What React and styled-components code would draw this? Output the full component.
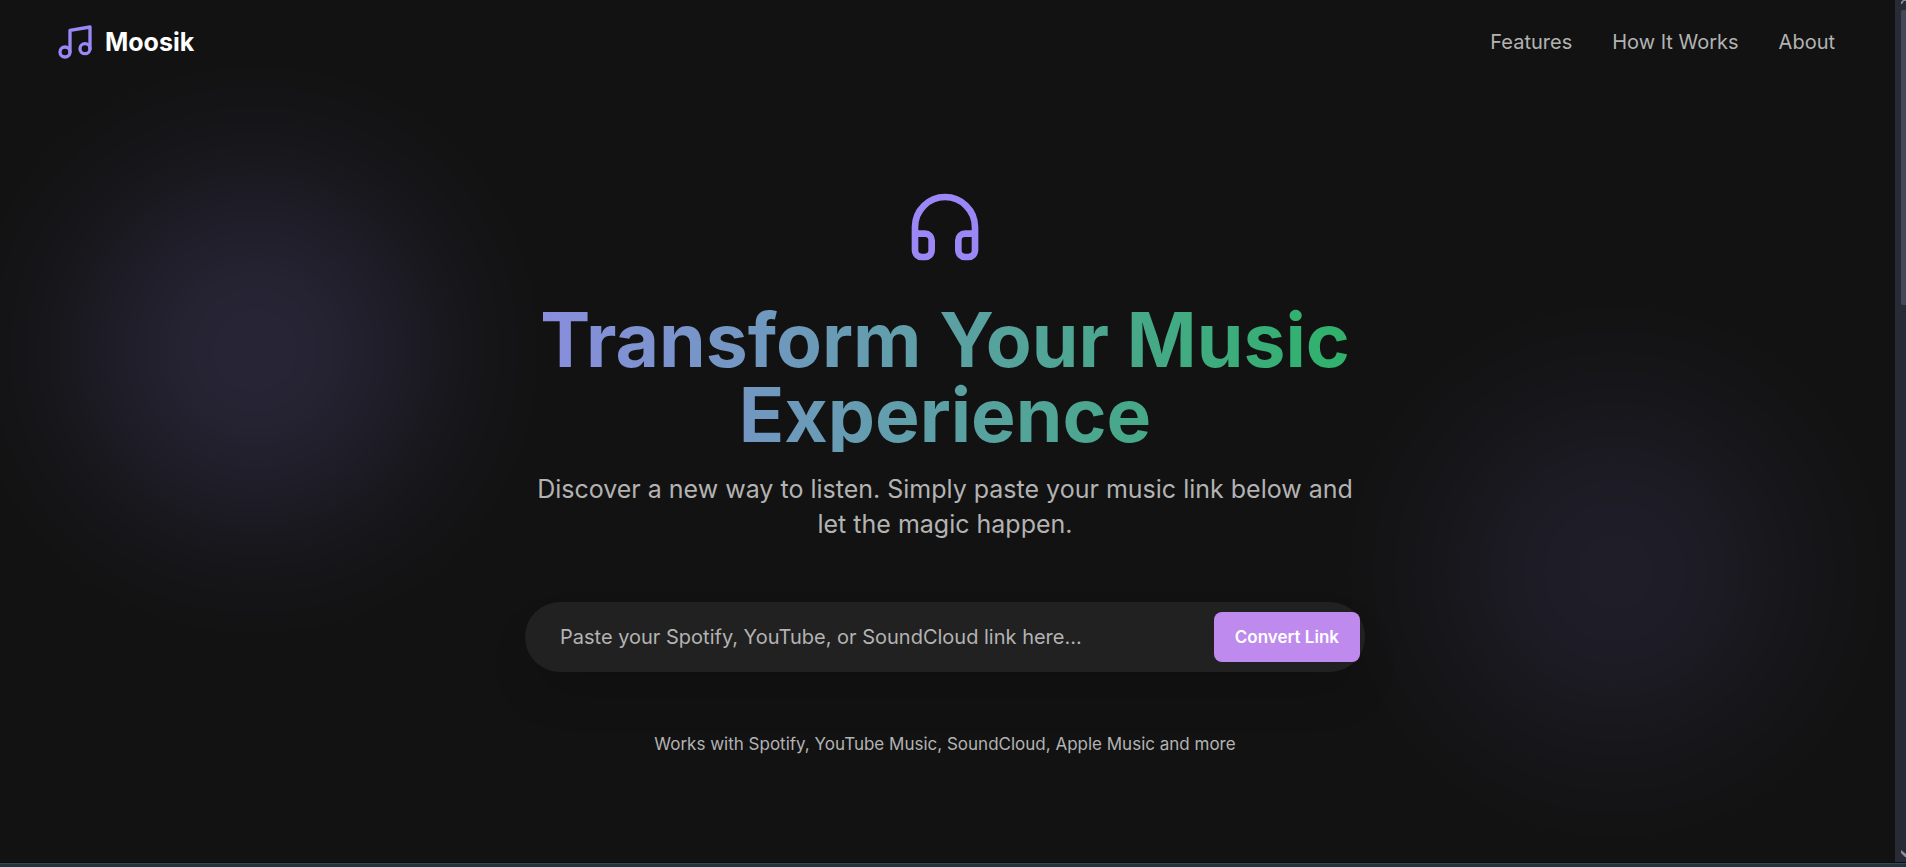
import React from "react";
import styled, { createGlobalStyle } from "styled-components";
import { Music, Headphones } from "lucide-react";

const GlobalStyle = createGlobalStyle`
  *, *::before, *::after { box-sizing: border-box; }
  body {
    margin: 0;
    background: #121212;
    color: #ffffff;
    font-family: Inter, "Liberation Sans", sans-serif;
  }
`;

const Frame = styled.div`
  display: grid;
  grid-template-columns: 1fr 11px;
  grid-template-rows: 1fr 5px;
  min-height: 100vh;
`;

const Page = styled.div`
  position: relative;
  display: flex;
  flex-direction: column;
  overflow: hidden;
`;

const Glow = styled.div`
  position: absolute;
  width: 340px;
  height: 340px;
  border-radius: 50%;
  background: #9b87f5;
  opacity: ${(p) => p.$opacity};
  filter: blur(80px);
  top: ${(p) => p.$top};
  left: ${(p) => p.$left};
  right: ${(p) => p.$right};
  bottom: ${(p) => p.$bottom};
`;

const Header = styled.header`
  display: flex;
  justify-content: space-between;
  align-items: center;
  padding: 22px 60px 22px 55px;
  z-index: 1;
`;

const Brand = styled.a`
  display: flex;
  align-items: center;
  gap: 10px;
  color: #ffffff;
  font-size: 25px;
  line-height: 35px;
  font-weight: 700;
  text-decoration: none;

  svg { color: #9b87f5; }
`;

const Nav = styled.nav`
  display: flex;
  gap: 40px;
`;

const NavLink = styled.a`
  color: #b3b3b3;
  font-size: 20px;
  line-height: 30px;
  text-decoration: none;
`;

const Hero = styled.main`
  flex: 1;
  display: flex;
  flex-direction: column;
  align-items: center;
  justify-content: center;
  text-align: center;
  padding: 0 60px 2px 55px;
  z-index: 1;

  > svg { color: #9b87f5; }
`;

const Title = styled.h1`
  width: 100%;
  max-width: 1120px;
  margin: 35px 0 20px;
  font-size: 75px;
  line-height: 75px;
  font-weight: 700;
  color: transparent;
  background: linear-gradient(to right, #9b87f5, #1db954);
  background-clip: text;
`;

const Subtitle = styled.p`
  max-width: 840px;
  margin: 0 0 60px;
  color: #b3b3b3;
  font-size: 25px;
  line-height: 35px;
`;

const LinkForm = styled.form`
  display: flex;
  align-items: center;
  width: 100%;
  max-width: 840px;
  height: 70px;
  padding: 0 5px 0 35px;
  border-radius: 35px;
  background: #212121;
  box-shadow: 0 25px 50px -12px rgba(0, 0, 0, 0.2);
`;

const LinkInput = styled.input`
  flex: 1;
  min-width: 0;
  height: 100%;
  padding: 0;
  border: 0;
  outline: 0;
  background: transparent;
  color: #ffffff;
  font: inherit;
  font-size: 20px;

  &::placeholder { color: #b3b3b3; opacity: 1; }
`;

const ConvertButton = styled.button`
  height: 50px;
  padding: 0 21px;
  border: 0;
  border-radius: 8px;
  background: #be8aee;
  color: #ffffff;
  font: inherit;
  font-size: 17px;
  font-weight: 600;
`;

const Note = styled.p`
  margin: 60px 0 0;
  color: #b3b3b3;
  font-size: 17px;
  line-height: 25px;
`;

const Scrollbar = styled.div`
  display: flex;
  flex-direction: column;
  align-items: flex-end;
  justify-content: space-between;
  background: #282a36;
  overflow: hidden;

  svg { display: block; color: #8e8f96; }
`;

const Thumb = styled.div`
  width: 5px;
  height: 34vh;
  margin: 5px 0 auto;
  border-radius: 2px 0 0 2px;
  background: #44475a;
`;

const WindowEdge = styled.div`
  grid-column: 1 / -1;
  border-top: 1px solid #0a0d18;
  background: #1b3640;
  box-shadow: inset 0 1px #33484f;
`;

export default function App() {
  return (
    <Frame>
      <GlobalStyle />
      <Page>
        <Glow $top="180px" $left="85px" $opacity={0.17} />
        <Glow $bottom="120px" $right="110px" $opacity={0.1} />
        <Header>
          <Brand href="#">
            <Music size={40} />
            Moosik
          </Brand>
          <Nav>
            <NavLink href="#features">Features</NavLink>
            <NavLink href="#how-it-works">How It Works</NavLink>
            <NavLink href="#about">About</NavLink>
          </Nav>
        </Header>
        <Hero>
          <Headphones size={80} />
          <Title>Transform Your Music Experience</Title>
          <Subtitle>
            Discover a new way to listen. Simply paste your music link below and
            let the magic happen.
          </Subtitle>
          <LinkForm onSubmit={(e) => e.preventDefault()}>
            <LinkInput
              type="text"
              aria-label="Music link"
              placeholder="Paste your Spotify, YouTube, or SoundCloud link here..."
            />
            <ConvertButton type="submit">Convert Link</ConvertButton>
          </LinkForm>
          <Note>Works with Spotify, YouTube Music, SoundCloud, Apple Music and more</Note>
        </Hero>
      </Page>
      <Scrollbar aria-hidden="true">
        <svg width="5" height="5" viewBox="0 0 5 5">
          <path d="M0 4V2L2 0H5V1H3L1 4Z" fill="currentColor" />
        </svg>
        <Thumb />
        <svg width="5" height="12" viewBox="0 0 5 12">
          <path d="M0 0L5 4V7L4 7L0 3Z" fill="currentColor" />
        </svg>
      </Scrollbar>
      <WindowEdge />
    </Frame>
  );
}
